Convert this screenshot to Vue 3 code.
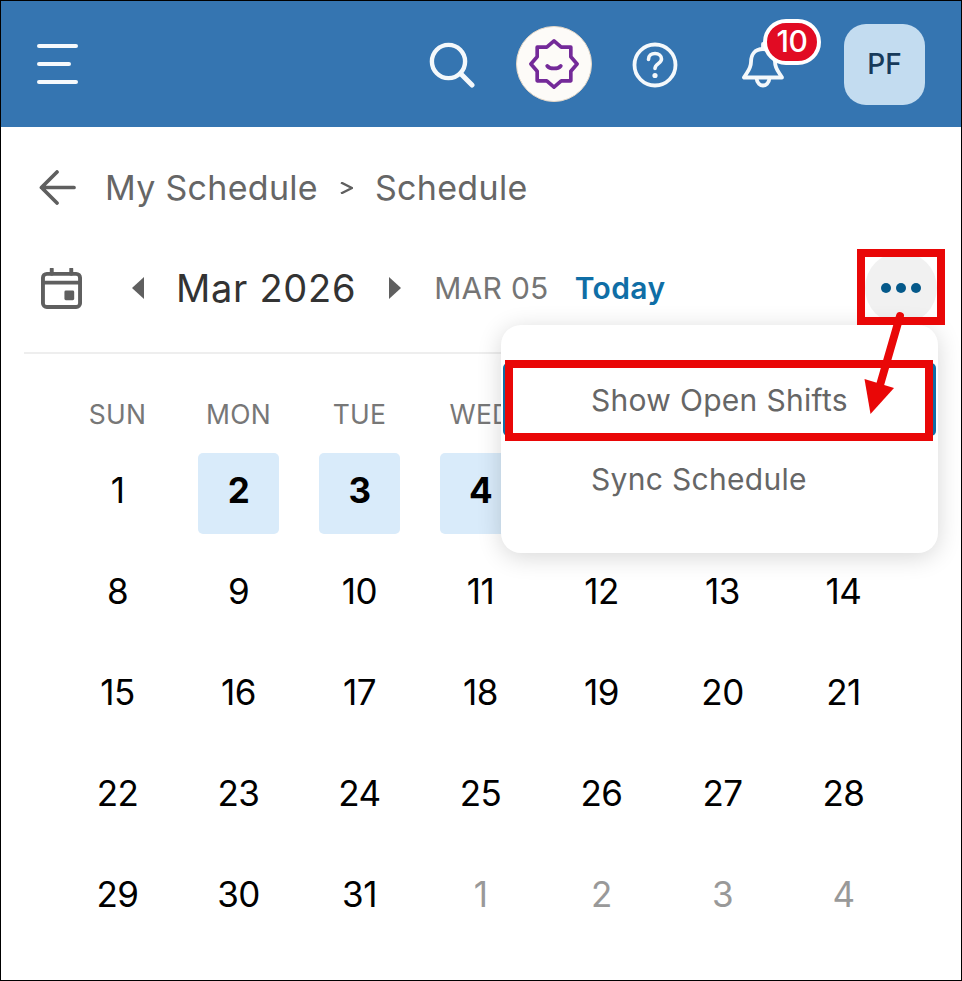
<script setup>
// THU, FRI, SAT and the 5th to 7th sit behind the open menu
const weekdays = [
  { label: 'SUN' },
  { label: 'MON' },
  { label: 'TUE' },
  { label: 'WED' },
  { label: 'THU', covered: true },
  { label: 'FRI', covered: true },
  { label: 'SAT', covered: true }
]

const days = []
for (let d = 1; d <= 31; d++) {
  days.push({ label: d, active: d >= 2 && d <= 6, muted: false, covered: d >= 5 && d <= 7 })
}
for (let d = 1; d <= 4; d++) {
  days.push({ label: d, active: false, muted: true, covered: false })
}
</script>

<template>
  <div class="screen">
    <header class="topbar">
      <button class="menu-btn" aria-label="Menu">
        <span class="line"></span>
        <span class="line short"></span>
        <span class="line"></span>
      </button>
      <div class="top-actions">
        <svg class="ico-search" viewBox="0 0 46 46" fill="none" stroke="#f4f8fb" stroke-width="4.4" stroke-linecap="round">
          <circle cx="19.5" cy="19.5" r="16.6" />
          <path d="M31.5 31.5L43 43" stroke-width="5" />
        </svg>
        <div class="sparkle">
          <svg viewBox="0 0 52 52" fill="none" stroke="#742a99" stroke-width="3.8" stroke-linejoin="round" stroke-linecap="round">
            <path d="M26 2L33.5 8.5L43.5 8.5L43.5 18.5L50 26L43.5 33.5L43.5 43.5L33.5 43.5L26 50L18.5 43.5L8.5 43.5L8.5 33.5L2 26L8.5 18.5L8.5 8.5L18.5 8.5Z" />
            <path d="M19 28C22 31.5 30 31.5 33 28" stroke-width="4" />
          </svg>
        </div>
        <svg class="ico-help" viewBox="0 0 46 46" fill="none" stroke="#f4f8fb" stroke-width="3.8" stroke-linecap="round">
          <circle cx="23" cy="23" r="20.5" />
          <path d="M16.5 17.5C16.5 13.5 19.5 11.5 23 11.5C26.8 11.5 29.5 13.8 29.5 17C29.5 21.5 23 21.8 23 26.5" stroke-width="3.6" />
          <circle cx="23" cy="33.5" r="2.6" fill="#f4f8fb" stroke="none" />
        </svg>
        <div class="bell">
          <svg viewBox="0 0 44 46" fill="none" stroke="#f4f8fb" stroke-width="3.8" stroke-linecap="round" stroke-linejoin="round">
            <path d="M22 2V7M22 7C13.5 7 10 13 10 20C10 27 6 30 3 35.5H41C38 30 34 27 34 20C34 13 30.5 7 22 7Z" />
            <path d="M15.5 36C16 41.5 19.5 43.5 22 43.5C24.5 43.5 28 41.5 28.5 36" />
          </svg>
          <span class="badge">10</span>
        </div>
        <div class="avatar">PF</div>
      </div>
    </header>

    <nav class="crumbs">
      <svg class="ico-back" viewBox="0 0 38 36" fill="none" stroke="#5f5f5f" stroke-width="3.8" stroke-linecap="round" stroke-linejoin="round">
        <path d="M2.5 18H36M18.5 2L2.5 18L18.5 34" />
      </svg>
      <span>My Schedule</span>
      <svg class="ico-sep" viewBox="0 0 13 12" fill="none" stroke="#5f5f5f" stroke-width="2.4">
        <path d="M1 0.5L12 6L1 11.5" />
      </svg>
      <span>Schedule</span>
    </nav>

    <div class="toolbar">
      <svg class="ico-cal" viewBox="0 0 42 42" fill="none" stroke="#5f5f5f" stroke-width="4">
        <rect x="2" y="6" width="38" height="34" rx="4" />
        <path d="M2 15H40" />
        <path d="M11 1V6M31 1V6" stroke-linecap="round" />
        <rect x="24" y="23" width="10" height="10" rx="1.5" fill="#5f5f5f" stroke="none" />
      </svg>
      <span class="tri left"></span>
      <span class="month">Mar 2026</span>
      <span class="tri right"></span>
      <span class="date">MAR 05</span>
      <span class="today">Today</span>
      <button class="more-btn" aria-label="More">
        <i></i><i></i><i></i>
      </button>
    </div>

    <div class="calendar">
      <div v-for="w in weekdays" :key="w.label" class="weekday">
        <template v-if="!w.covered">{{ w.label }}</template>
      </div>
      <div
        v-for="(d, i) in days"
        :key="i"
        class="day"
        :class="{ muted: d.muted }"
      >
        <span class="day-cell" :class="{ active: d.active }">
          <template v-if="!d.covered">{{ d.label }}</template>
        </span>
      </div>
    </div>

    <div class="popup">
      <div class="popup-item focused">Show Open Shifts</div>
      <div class="popup-item">Sync Schedule</div>
    </div>

    <div class="mark mark-more"></div>
    <div class="mark mark-item"></div>
    <svg class="mark-arrow" viewBox="0 0 962 981">
      <path d="M900 316L878 392" stroke="#e90707" stroke-width="8" stroke-linecap="round" fill="none" />
      <path d="M864.5 379L894 388L870.5 414Z" fill="#e90707" />
    </svg>
  </div>
</template>

<style scoped>
.screen {
  position: relative;
  width: 962px;
  height: 981px;
  box-sizing: border-box;
  border: 1px solid #000;
  background: #fff;
  overflow: hidden;
  font-family: "Inter", "Noto Sans", sans-serif;
  color: #000;
}

.topbar {
  height: 126px;
  background: #3575b1;
  display: flex;
  align-items: center;
  justify-content: space-between;
  padding: 0 36px;
}
.menu-btn {
  width: 41px;
  display: flex;
  flex-direction: column;
  gap: 14px;
  padding: 0;
  border: 0;
  background: none;
  margin-top: -1px;
}
.line {
  display: block;
  width: 41px;
  height: 4px;
  border-radius: 2px;
  background: #f6f9fc;
}
.line.short { width: 34px; }

.top-actions {
  display: flex;
  align-items: center;
}
.ico-search { width: 46px; height: 46px; margin-top: 1px; }
.sparkle {
  width: 76px;
  height: 76px;
  box-sizing: border-box;
  margin-left: 41px;
  border-radius: 50%;
  background: #fdfbf8;
  border: 1px solid #e5d7c6;
  display: flex;
  align-items: center;
  justify-content: center;
}
.sparkle svg { width: 50px; height: 50px; }
.ico-help { width: 46px; height: 46px; margin-left: 40px; margin-top: 1px; }
.bell {
  position: relative;
  width: 44px;
  height: 46px;
  margin-left: 63px;
  margin-top: 1px;
}
.bell svg { width: 44px; height: 46px; display: block; }
.badge {
  position: absolute;
  left: 22px;
  top: -23px;
  width: 58px;
  height: 46px;
  box-sizing: border-box;
  border: 4px solid #fff;
  border-radius: 23px;
  background: #e10b23;
  color: #fff;
  font-size: 30px;
  font-weight: 500;
  line-height: 37px;
  text-align: center;
  letter-spacing: -0.5px;
}
.avatar {
  width: 81px;
  height: 81px;
  margin-left: 59px;
  margin-top: 0;
  border-radius: 22px;
  background: #c3dcf0;
  color: #173a5a;
  font-size: 28px;
  font-weight: 500;
  display: flex;
  align-items: center;
  justify-content: center;
}

.crumbs {
  height: 120px;
  display: flex;
  align-items: center;
  padding-left: 38px;
  color: #666;
  font-size: 34px;
  letter-spacing: 0.3px;
}
.ico-back { width: 37px; height: 35px; margin-right: 29px; }
.ico-sep { width: 13px; height: 12px; margin: 2px 22px 0; }

.toolbar {
  height: 64px;
  margin-top: 9px;
  display: flex;
  align-items: center;
  padding-left: 40px;
}
.ico-cal { width: 41px; height: 41px; margin-right: 50px; }
.tri {
  width: 0;
  height: 0;
  border-top: 11px solid transparent;
  border-bottom: 11px solid transparent;
}
.tri.left { border-right: 12px solid #5f5f5f; }
.tri.right { border-left: 12px solid #5f5f5f; }
.month {
  margin: 0 33px 0 32px;
  font-size: 38px;
  color: #333;
  letter-spacing: 0.7px;
}
.date {
  margin-left: 33px;
  font-size: 30px;
  color: #757575;
  letter-spacing: 0.3px;
}
.today {
  margin-left: 26px;
  font-size: 30px;
  font-weight: 600;
  color: #0f6ea6;
  letter-spacing: 0.4px;
}
.more-btn {
  margin-left: auto;
  margin-right: 24px;
  width: 72px;
  height: 72px;
  padding: 0;
  border: 0;
  border-radius: 50%;
  background: #f1f1f1;
  display: flex;
  align-items: center;
  justify-content: center;
  gap: 5px;
}
.more-btn i {
  width: 10px;
  height: 10px;
  border-radius: 50%;
  background: #05598a;
}

.calendar {
  margin: 32px 23px 0;
  padding: 30px 33px 0;
  border-top: 2px solid #eee;
  display: grid;
  grid-template-columns: repeat(7, 121px);
  grid-template-rows: 59px;
  grid-auto-rows: 101px;
}
.weekday {
  text-align: center;
  font-size: 26.5px;
  letter-spacing: 0.2px;
  color: #777;
  line-height: 60px;
  height: 59px;
}
.day {
  display: flex;
  align-items: center;
  justify-content: center;
  font-size: 35px;
  letter-spacing: -0.5px;
}
.day-cell {
  width: 81px;
  height: 81px;
  box-sizing: border-box;
  padding-bottom: 7px;
  display: flex;
  align-items: center;
  justify-content: center;
  border-radius: 5px;
}
.day-cell.active {
  background: #d9ebfa;
  font-weight: 700;
}
.day.muted { color: #999; }

.popup {
  position: absolute;
  left: 500px;
  top: 324px;
  width: 437px;
  height: 228px;
  box-sizing: border-box;
  padding-top: 38px;
  background: #fff;
  border-radius: 20px;
  box-shadow: 0 4px 24px rgba(0, 0, 0, 0.16);
  color: #666;
  font-size: 30px;
  letter-spacing: 0.3px;
}
.popup-item {
  height: 73px;
  line-height: 74px;
  padding-left: 90px;
}
.popup-item + .popup-item { margin-top: 6px; }
.popup-item.focused {
  margin: 0 2px;
  padding-left: 88px;
  border-radius: 5px;
  box-shadow: inset 0 0 0 3px #0f6ea6;
}

.mark {
  position: absolute;
  box-sizing: border-box;
  border: 8px solid #e90707;
}
.mark-more { left: 856px; top: 248px; width: 88px; height: 76px; }
.mark-item { left: 504px; top: 359px; width: 428px; height: 81px; }
.mark-arrow {
  position: absolute;
  left: -1px;
  top: -1px;
  width: 962px;
  height: 981px;
  pointer-events: none;
}
</style>
